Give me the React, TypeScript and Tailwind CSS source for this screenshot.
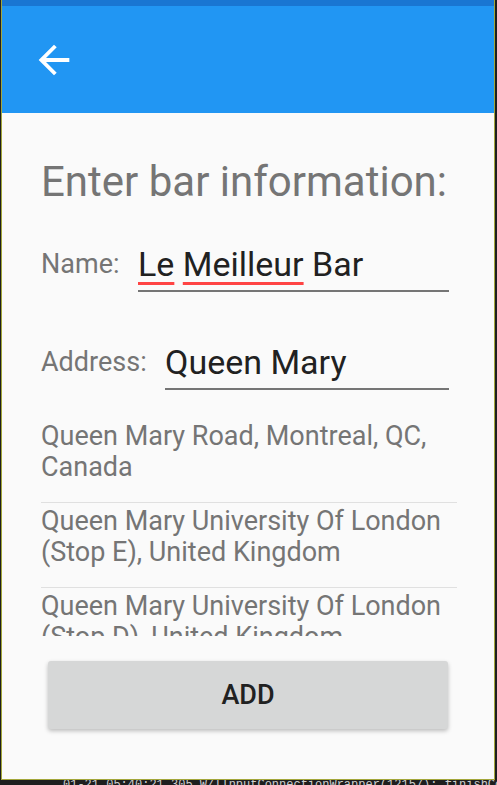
import React from "react";

function ArrowBack() {
  return (
    <svg width="46" height="46" viewBox="0 0 24 24" fill="white">
      <path d="M20 11H7.83l5.59-5.59L12 4l-8 8 8 8 1.41-1.41L7.83 13H20v-2z" />
    </svg>
  );
}

export default function App() {
  const font = { fontFamily: "Roboto, 'Noto Sans', sans-serif" };
  return (
    <div className="w-[497px] h-[785px] bg-[#1e1e1e] overflow-hidden relative" style={font}>
      <div className="ml-[1px] w-[494px] h-[780px] border-l border-r border-b border-[#a3a63a] bg-[#fafafa] flex flex-col overflow-hidden">
        <div className="h-[6px] bg-[#1976d2] shrink-0" />
        <div className="h-[107px] bg-[#2196f3] shrink-0 flex items-center pl-[29px]">
          <ArrowBack />
        </div>
        <div className="flex-1 flex flex-col pl-[39px] pr-[45px]">
          <div className="mt-[44px] text-[42px] leading-[50px] text-[#757575] whitespace-nowrap">
            Enter bar information:
          </div>
          <div className="mt-[37px] flex items-end">
            <div className="text-[27px] leading-[30px] text-[#757575] w-[97px] pb-[13px]">Name:</div>
            <div className="flex-1 border-b-2 border-[#757575] pb-[6px]">
              <div className="text-[34px] leading-[40px] text-[#212121] whitespace-nowrap">
                <span className="underline decoration-[#ff4444] decoration-[3px] underline-offset-[6px]">Le</span>{" "}
                <span className="underline decoration-[#ff4444] decoration-[3px] underline-offset-[6px]">Meilleur</span>{" "}
                Bar
              </div>
            </div>
          </div>
          <div className="mt-[50px] flex items-end">
            <div className="text-[27px] leading-[30px] text-[#757575] w-[124px] pb-[13px]">Address:</div>
            <div className="flex-1 border-b-2 border-[#757575] pb-[6px]">
              <div className="text-[34px] leading-[40px] text-[#212121] whitespace-nowrap">Queen Mary</div>
            </div>
          </div>
          <div className="mt-[31px] -mr-[8px] h-[215px] overflow-hidden text-[27px] leading-[31px] text-[#757575] whitespace-nowrap">
            <div className="pb-[19px] border-b border-[#e0e0e0]">
              Queen Mary Road, Montreal, QC,
              <br />
              Canada
            </div>
            <div className="pt-[3px] pb-[19px] border-b border-[#e0e0e0]">
              Queen Mary University Of London
              <br />
              (Stop E), United Kingdom
            </div>
            <div className="pt-[3px]">
              Queen Mary University Of London
              <br />
              (Stop D), United Kingdom
            </div>
          </div>
          <div className="mt-[25px] ml-[7px] w-[400px] h-[68px] shrink-0 bg-[#d6d7d7] rounded-[3px] shadow-[0_2px_4px_rgba(0,0,0,0.25)] flex items-center justify-center text-[27px] font-medium text-[#212121]">
            ADD
          </div>
        </div>
      </div>
      <div className="flex items-start h-[5px] overflow-hidden">
        <div className="ml-[44px] w-[18px] h-[5px] bg-[#3a3a3a]" />
        <div
          className="ml-[19px] text-[12px] leading-[12px] text-[#cfcfcf] whitespace-nowrap -mt-[1px]"
          style={{ fontFamily: "'Liberation Mono', monospace" }}
        >
          01-21 05:40:21.305 W/IInputConnectionWrapper(12157): finishComposingText
        </div>
      </div>
    </div>
  );
}
